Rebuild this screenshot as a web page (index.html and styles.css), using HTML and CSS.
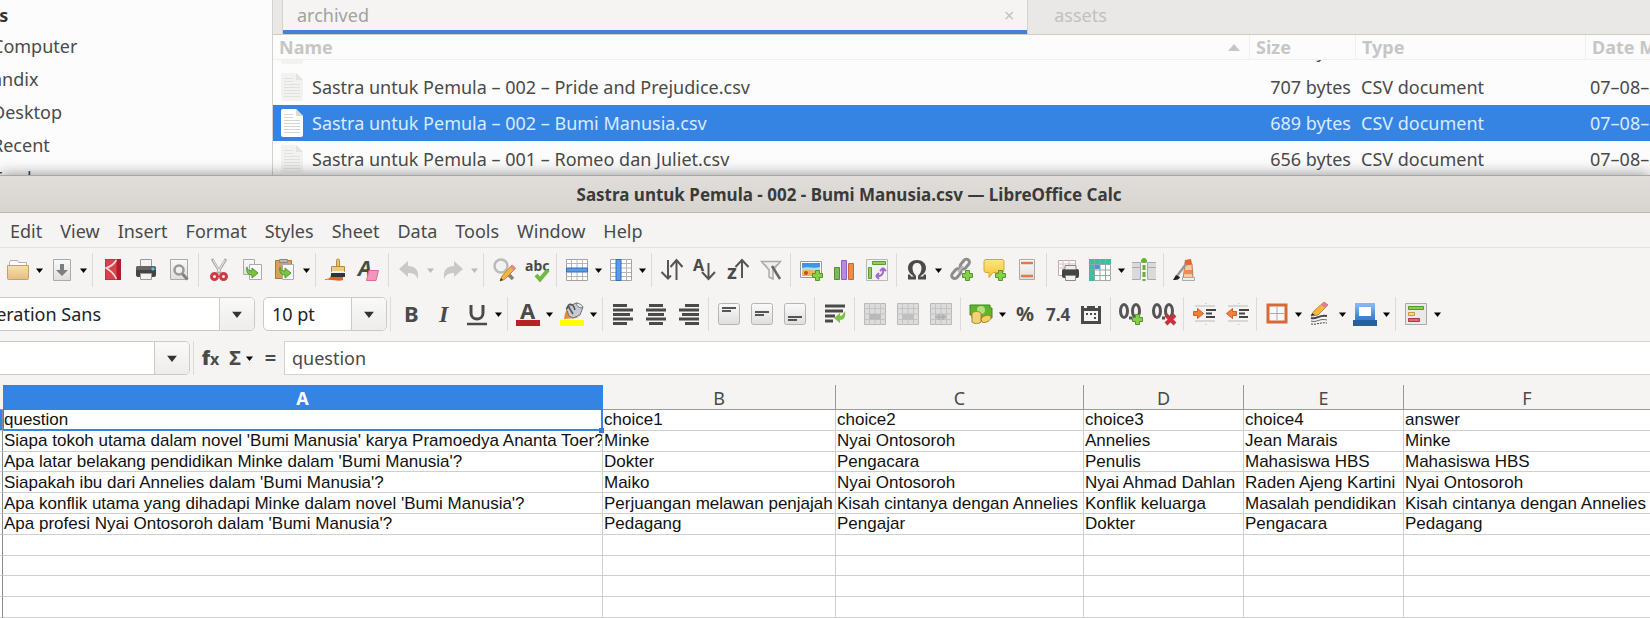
FILE: index.html
```html
<!DOCTYPE html>
<html lang="id">
<head>
<meta charset="utf-8">
<title>Sastra untuk Pemula - 002 - Bumi Manusia.csv — LibreOffice Calc</title>
<link rel="stylesheet" href="styles.css">
</head>
<body>
<svg class="defs" aria-hidden="true">
  <defs>
    <linearGradient id="gSheet" x1="0" y1="0" x2="0" y2="1"><stop offset="0" stop-color="#fafafa"/><stop offset="1" stop-color="#dedede"/></linearGradient>
    <linearGradient id="gFolder" x1="0" y1="0" x2="0" y2="1"><stop offset="0" stop-color="#f7dfb4"/><stop offset="1" stop-color="#e6bd7e"/></linearGradient>
    <linearGradient id="gBlue" x1="0" y1="0" x2="0" y2="1"><stop offset="0" stop-color="#86b8f0"/><stop offset="1" stop-color="#3f7fd0"/></linearGradient>
    <linearGradient id="gYellow" x1="0" y1="0" x2="0" y2="1"><stop offset="0" stop-color="#ffe680"/><stop offset="1" stop-color="#f5c33b"/></linearGradient>
    <symbol id="caret" viewBox="0 0 7 5"><path d="M0 .5h7L3.500 5z"/></symbol>
    <symbol id="plus" viewBox="0 0 11 11"><path d="M3.500.5h4v3h3v4h-3v3h-4v-3h-3v-4h3z" fill="#86cf4c" stroke="#55962a"/></symbol>
    <symbol id="page" viewBox="0 0 22 28"><path class="sheet-fill" d="M2 0h13l7 7v19a2 2 0 0 1-2 2H2a2 2 0 0 1-2-2V2a2 2 0 0 1 2-2z"/><path d="M15 0v7h7z" fill="#dcdad6"/><path d="M3 5.500h9M3 8.500h9M3 11.500h16M3 14.500h16M3 17.500h16M3 20.500h16M3 23.500h16" stroke="#d8d6d3"/></symbol>
    <symbol id="tableGrey" viewBox="0 0 24 24"><path d="M1.500 1.500h21v21h-21z" fill="#dcdcdc" stroke="#b9b9b9"/><path d="M6.500 1v22M12 1v22M17.500 1v22M1 6.500h22M1 12h22M1 17.500h22" stroke="#c3c3c3"/></symbol>
  </defs>
</svg>

<section class="files" aria-label="Files">
  <nav class="places" aria-label="Places">
    <h2>Devices</h2>
    <a href="#computer">Computer</a>
    <a href="#andix">andix</a>
    <a href="#desktop">Desktop</a>
    <a href="#recent">Recent</a>
    <a href="#trash">Trash</a>
  </nav>
  <div class="browser">
    <div class="tabs" role="tablist">
      <div class="tab active"><button type="button" role="tab" aria-selected="true">archived</button><button type="button" class="close" aria-label="Close tab">×</button></div>
      <div class="tab"><button type="button" role="tab" aria-selected="false">assets</button></div>
    </div>
    <table class="listing">
      <colgroup><col><col class="c-size"><col class="c-type"><col class="c-date"></colgroup>
      <thead><tr>
        <th><span class="sort">Name <svg class="sort-mark" viewBox="0 0 12 7" aria-hidden="true"><path d="M0 7L6 0l6 7z" fill="#c6c6c5"/></svg></span></th>
        <th>Size</th><th>Type</th><th>Date Modified</th>
      </tr></thead>
      <tbody>
        <tr class="peek"><td><div><span class="name"><svg class="page"><use href="#page"/></svg></span></div></td><td class="num"><div><span>bytes</span></div></td><td></td><td></td></tr>
        <tr><td><span class="name"><svg class="page"><use href="#page"/></svg>Sastra untuk Pemula – 002 – Pride and Prejudice.csv</span></td><td class="num">707 bytes</td><td>CSV document</td><td>07–08–2023</td></tr>
        <tr class="selected"><td><span class="name"><svg class="page"><use href="#page"/></svg>Sastra untuk Pemula – 002 – Bumi Manusia.csv</span></td><td class="num">689 bytes</td><td>CSV document</td><td>07–08–2023</td></tr>
        <tr><td><span class="name"><svg class="page"><use href="#page"/></svg>Sastra untuk Pemula – 001 – Romeo dan Juliet.csv</span></td><td class="num">656 bytes</td><td>CSV document</td><td>07–08–2023</td></tr>
      </tbody>
    </table>
  </div>
</section>

<main class="calc">
  <header class="titlebar"><h1>Sastra untuk Pemula - 002 - Bumi Manusia.csv — LibreOffice Calc</h1></header>
  <nav class="menubar" aria-label="Menu">
    <button type="button">Edit</button><button type="button">View</button><button type="button">Insert</button><button type="button">Format</button><button type="button">Styles</button><button type="button">Sheet</button><button type="button">Data</button><button type="button">Tools</button><button type="button">Window</button><button type="button">Help</button>
  </nav>

  <div class="toolbar standard" role="toolbar" aria-label="Standard">
    <button type="button" aria-label="Open"><svg viewBox="0 0 24 24"><path d="M3.500 11V4.500l1-2h7l1 2h8V11z" fill="#fff" stroke="#b5b1aa"/><path d="M1.500 7.500h21v13a1 1 0 0 1-1 1h-19a1 1 0 0 1-1-1z" fill="url(#gFolder)" stroke="#c9a063"/></svg></button>
    <button type="button" class="more" aria-label="Open options"><svg><use href="#caret"/></svg></button>
    <button type="button" aria-label="Save"><svg viewBox="0 0 24 24"><path d="M3.500 1.500h17v21h-17z" fill="url(#gSheet)" stroke="#aaa"/><path d="M10 6h4v6h4l-6 6-6-6h4z" fill="#7c7f80"/></svg></button>
    <button type="button" class="more" aria-label="Save options"><svg><use href="#caret"/></svg></button>
    <i class="sep"></i>
    <button type="button" aria-label="Export as PDF"><svg viewBox="0 0 24 24"><path d="M4 1h16v21H4z" fill="#c9303c"/><path d="M5 2h10v19H5z" fill="#d4444e"/><path d="M15.500 2C13 6 9 9 5 10c4 2 8 6 10.500 11" fill="none" stroke="#f8dcdd" stroke-width="1.500"/><path d="M16 1h4v21h-4z" fill="#b01c29"/></svg></button>
    <button type="button" aria-label="Print"><svg viewBox="0 0 24 24"><path d="M6.500 9V1.500h11V9" fill="#f4f4f4" stroke="#999"/><rect x="2" y="8" width="20" height="11" rx="2" fill="#444"/><path d="M3 8h18l1 4H2z" fill="#666"/><path d="M6.500 15.500h11v6h-11z" fill="#f2f2f2" stroke="#999"/><circle cx="19" cy="11" r="1.500" fill="#5bc7f0"/></svg></button>
    <button type="button" aria-label="Print Preview"><svg viewBox="0 0 24 24"><path d="M3.500 1.500h17v20h-17z" fill="url(#gSheet)" stroke="#aaa"/><circle cx="12" cy="12" r="4.500" fill="#f0f0f0" stroke="#999" stroke-width="2.500"/><path d="M15.500 16l5 5.500" stroke="#8a7f75" stroke-width="3"/></svg></button>
    <i class="sep"></i>
    <button type="button" aria-label="Cut"><svg viewBox="0 0 24 24"><path d="M5 1l8.500 14M19 1l-8.500 14" stroke="#a9a9a9" stroke-width="2.600"/><path d="M6 2l7 12M18 2l-7 12" stroke="#ededed"/><g fill="none" stroke="#cf3a45" stroke-width="3"><circle cx="7.500" cy="18.500" r="3"/><circle cx="16.500" cy="18.500" r="3"/></g></svg></button>
    <button type="button" aria-label="Copy"><svg viewBox="0 0 24 24"><path d="M3.500 1.500h11v15h-11z" fill="url(#gSheet)" stroke="#aaa"/><path d="M9.500 6.500h12v15h-12z" fill="#fafafa" stroke="#aaa"/><path d="M7 9c0 3 2 4 5 4v-3l6 5-6 5v-3c-4 0-6-3-5-8z" fill="#7cc244" stroke="#4c9a2a"/></svg></button>
    <button type="button" aria-label="Paste"><svg viewBox="0 0 24 24"><path d="M2.500 2.500h16v18h-16z" fill="#d3a35c" stroke="#a5793c"/><path d="M6.500 1.500h8v3h-8z" fill="#bbb" stroke="#888"/><path d="M9.500 6.500h11v15h-11z" fill="#fafafa" stroke="#aaa"/><path d="M7 9c0 3 2 4 5 4v-3l6 5-6 5v-3c-4 0-6-3-5-8z" fill="#7cc244" stroke="#4c9a2a"/></svg></button>
    <button type="button" class="more" aria-label="Paste options"><svg><use href="#caret"/></svg></button>
    <i class="sep"></i>
    <button type="button" aria-label="Clone Formatting"><svg viewBox="0 0 24 24"><path d="M1 21c4 0 5-1 6-4h12v5c-5 2-10-1-18 0z" fill="#e2632a"/><path d="M12.500 8V2.500a1.500 1.500 0 0 1 3 0V8" fill="#e8c27b" stroke="#b98a3c"/><path d="M7.500 8.500h13v5h-13z" fill="#edc982" stroke="#b98a3c"/><path d="M8 13h12v2H8z" fill="#eee"/><path d="M7 15h14v4H7z" fill="#333"/></svg></button>
    <button type="button" aria-label="Clear Direct Formatting"><svg viewBox="0 0 24 24"><text class="ital" x="1" y="18" font-size="22">A</text><path d="M12 12.500h9.500l-2.500 10H9.500z" fill="#f296bd" stroke="#e0669b" stroke-linejoin="round"/></svg></button>
    <i class="sep"></i>
    <button type="button" class="off" aria-label="Undo"><svg viewBox="0 0 24 24"><path d="M2 11l9-8v5c8 0 11 5 10 13-2-4-4-6-10-6v4z" fill="#c9c9c9"/></svg></button>
    <button type="button" class="more off" aria-label="Undo list"><svg><use href="#caret"/></svg></button>
    <button type="button" class="off" aria-label="Redo"><svg viewBox="0 0 24 24"><path d="M22 11l-9-8v5C5 8 2 13 3 21c2-4 4-6 10-6v4z" fill="#c9c9c9"/></svg></button>
    <button type="button" class="more off" aria-label="Redo list"><svg><use href="#caret"/></svg></button>
    <i class="sep"></i>
    <button type="button" aria-label="Find and Replace"><svg viewBox="0 0 24 24"><circle cx="9" cy="8" r="6.500" fill="#f2f2f2" stroke="#bbb" stroke-width="2.500"/><path d="M15 15l6 6" stroke="#8b7f72" stroke-width="3.500"/><path d="M8 23l2-5L20 7l3.500 3.500-11 11z" fill="#f4b63f" stroke="#c98a1d"/><path d="M18 9l2.500-2.500 3.500 3.500-2.500 2.500z" fill="#e08a98"/><path d="M8 23l1-3 2 2z" fill="#333"/></svg></button>
    <button type="button" aria-label="Spelling"><svg viewBox="0 0 24 24"><text x="0" y="13" font-size="14">abc</text><path d="M11 17l4 4.500 8-9.500" fill="none" stroke="#6fb944" stroke-width="4"/></svg></button>
    <i class="sep"></i>
    <button type="button" aria-label="Row"><svg viewBox="0 0 24 24"><path d="M1.500 1.500h21v21h-21z" fill="#fff" stroke="#a3a3a3"/><path d="M6.500 1v21M12 1v21M17.500 1v21M1 5.500h21M1 18.500h21" stroke="#b5b5b5"/><path d="M1.500 10h21v4h-21z" fill="#5b9be6" stroke="#2f6fbd"/></svg></button>
    <button type="button" class="more" aria-label="Row options"><svg><use href="#caret"/></svg></button>
    <button type="button" aria-label="Column"><svg viewBox="0 0 24 24"><path d="M1.500 1.500h21v21h-21z" fill="#fff" stroke="#a3a3a3"/><path d="M1 5.500h21M1 10h21M1 14.500h21M1 18.500h21M17.500 1v21" stroke="#b5b5b5"/><path d="M7 1.500h5v21H7z" fill="#5b9be6" stroke="#2f6fbd"/></svg></button>
    <button type="button" class="more" aria-label="Column options"><svg><use href="#caret"/></svg></button>
    <i class="sep"></i>
    <button type="button" aria-label="Sort"><svg class="ink" viewBox="0 0 24 24"><path d="M8 2v18M1.500 14L8 20.500l3-3M16.500 22V3M10.500 9l6-7 6 7"/></svg></button>
    <button type="button" aria-label="Sort Ascending"><svg class="ink" viewBox="0 0 24 24"><path d="M15.500 5v16M9 14l6.500 7 6.500-7"/><text x="0" y="13" font-size="16">A</text></svg></button>
    <button type="button" aria-label="Sort Descending"><svg class="ink" viewBox="0 0 24 24"><path d="M16 20V3M9.500 9L16 2l6.500 7"/><text x="1" y="21" font-size="20">z</text></svg></button>
    <button type="button" aria-label="AutoFilter"><svg viewBox="0 0 24 24"><path d="M2.500 3.500h19L14 12v9l-4-2v-7z" fill="#eee" stroke="#aaa" stroke-width="1.500"/><path d="M6 6l4 5M18 6l-5 5" stroke="#bbb"/><path d="M13 8l8 13" stroke="#666" stroke-width="2.500"/></svg></button>
    <i class="sep"></i>
    <button type="button" aria-label="Insert Image"><svg viewBox="0 0 24 24"><path d="M1.500 3.500h21v16h-21z" fill="#fff" stroke="#999"/><path d="M3 5h18v8H3z" fill="#3f98de"/><path d="M3 10c6-2 12 1 18-1v4H3z" fill="#a6e0f2"/><path d="M3 13c6-3 12 1 18-1v6H3z" fill="#f4b352"/><circle cx="7" cy="15" r="2" fill="#d0442d"/><use href="#plus" x="13" y="12" width="11" height="11"/></svg></button>
    <button type="button" aria-label="Insert Chart"><svg viewBox="0 0 24 24"><path d="M2.500 9.500h5v12h-5z" fill="#79b956" stroke="#4f8f30"/><path d="M9.500 2.500h5v19h-5z" fill="#b58ae0" stroke="#8e61c0"/><path d="M16.500 5.500h5v16h-5z" fill="#f08a55" stroke="#cd6430"/></svg></button>
    <button type="button" aria-label="Pivot Table"><svg viewBox="0 0 24 24"><path d="M1.500 1.500h21v21h-21z" fill="#f2f2f2" stroke="#b9b9b9"/><path d="M7.500 3.500h13v3h-13zM3.500 9.500h3v11h-3z" fill="#8fcf5f" stroke="#5c9a36"/><path d="M11 18c5 1 8-2 7-7M11 18l3-3M11 18l3 3M18 10l-3 3M18 10l3 3" fill="none" stroke="#a06cc9" stroke-width="2"/></svg></button>
    <i class="sep"></i>
    <button type="button" aria-label="Special Character"><svg viewBox="0 0 24 24"><path d="M3 21.500v-5h2l1 2h3C5 16 3 13.500 3 10c0-5 4-8 9-8s9 3 9 8c0 3.500-2 6-6 8.500h3l1-2h2v5h-8V18c2-2 3.500-5 3.500-8S15 5 12 5s-4.500 2-4.500 5S9 16 11 18v3.500z" fill="#4a4a4a"/></svg></button>
    <button type="button" class="more" aria-label="Special Character options"><svg><use href="#caret"/></svg></button>
    <button type="button" aria-label="Insert Hyperlink"><svg viewBox="0 0 24 24"><g fill="none" stroke="#8c8c8c" stroke-width="3"><rect x="-5" y="-3" width="11" height="6" rx="3" transform="translate(15.500 6.500) rotate(-50)"/><rect x="-5" y="-3" width="11" height="6" rx="3" transform="translate(7 16) rotate(-50)"/></g><path d="M9 14l5-6" stroke="#bbb" stroke-width="2"/><use href="#plus" x="13" y="12" width="11" height="11"/></svg></button>
    <button type="button" aria-label="Insert Comment"><svg viewBox="0 0 24 24"><path d="M4 1.500h16a2 2 0 0 1 2 2v9a2 2 0 0 1-2 2h-9l-4 5v-5H4a2 2 0 0 1-2-2v-9a2 2 0 0 1 2-2z" fill="url(#gYellow)" stroke="#d9a636"/><use href="#plus" x="13" y="12" width="11" height="11"/></svg></button>
    <button type="button" aria-label="Headers and Footers"><svg viewBox="0 0 24 24"><path d="M4.500 1.500h15v20h-15z" fill="url(#gSheet)" stroke="#aaa"/><path d="M6 5h12M6 18h12" stroke="#e07a4c" stroke-width="2.500"/></svg></button>
    <i class="sep"></i>
    <button type="button" aria-label="Define Print Area"><svg viewBox="0 0 24 24"><path d="M3.500 2.500h17v15h-17z" fill="#fff" stroke="#c7a7a7"/><path d="M3 6h18M3 10h18M8 2v15M14 2v15" stroke="#ddbcbc"/><rect x="7" y="11" width="17" height="9" rx="2" fill="#444"/><path d="M10 7.500h11v4H10z" fill="#eee" stroke="#888"/><path d="M10.500 17.500h10v5h-10z" fill="#f2f2f2" stroke="#888"/></svg></button>
    <button type="button" aria-label="Freeze Rows and Columns"><svg viewBox="0 0 24 24"><path d="M1.500 1.500h21v21h-21z" fill="#fff" stroke="#a8a8a8"/><path d="M1 1h22v5H6v17H1z" fill="#37c0a2"/><path d="M6 6h6v5H6z" fill="#4b94dd"/><path d="M6.500 1v21M12 1v21M17.500 1v21M1 6.500h21M1 12h21M1 17.500h21" stroke="#8aa9a2"/></svg></button>
    <button type="button" class="more" aria-label="Freeze options"><svg><use href="#caret"/></svg></button>
    <button type="button" aria-label="Split Window"><svg viewBox="0 0 24 24"><path d="M0 4h9v18H0zM15 4h9v18h-9z" fill="#d9dadd"/><path d="M0 4.500h8.500v17M24 4.500h-8.500v17M0 9.500h8M16 9.500h8M0 21.500h8M16 21.500h8" fill="none" stroke="#aaa"/><path d="M12 0v23" stroke="#62b132" stroke-width="3" stroke-dasharray="5 2"/><path d="M9 3h6" stroke="#62b132" stroke-width="3"/></svg></button>
    <i class="sep"></i>
    <button type="button" aria-label="Show Draw Functions"><svg viewBox="0 0 24 24"><path d="M13 7l7-1 1 15H11z" fill="#f6c9a2" stroke="#c9784a"/><path d="M13 2l6-1 1 5-8 2z" fill="#e0672e"/><path d="M13 12h7v4h-8z" fill="#ee8a4c"/><path d="M10.500 19.500h12v3h-12z" fill="#eee" stroke="#aaa"/><path d="M14 6L5 18" stroke="#999" stroke-width="2.500"/><path d="M1 22l3-5 4 2c-1 3-4 3-7 3z" fill="#222"/></svg></button>
  </div>

  <div class="toolbar" role="toolbar" aria-label="Formatting">
    <div class="combo font"><input type="text" aria-label="Font Name" value="Liberation Sans"><button type="button" aria-label="Font list"><svg><use href="#caret"/></svg></button></div>
    <div class="combo size"><input type="text" aria-label="Font Size" value="10 pt"><button type="button" aria-label="Size list"><svg><use href="#caret"/></svg></button></div>
    <i class="sep"></i>
    <button type="button" aria-label="Bold"><svg viewBox="0 0 24 24"><text x="5" y="20" font-size="22">B</text></svg></button>
    <button type="button" aria-label="Italic"><svg viewBox="0 0 24 24"><text class="serif" x="7" y="20" font-size="24">I</text></svg></button>
    <button type="button" aria-label="Underline"><svg viewBox="0 0 24 24"><path d="M6 3v8c0 8 12 8 12 0V3" fill="none" stroke="#4a4a4a" stroke-width="3"/><path d="M2 22h20" stroke="#4a4a4a" stroke-width="2.500"/></svg></button>
    <button type="button" class="more" aria-label="Underline options"><svg><use href="#caret"/></svg></button>
    <i class="sep"></i>
    <button type="button" aria-label="Font Color"><svg viewBox="0 0 24 24"><text x="4" y="17" font-size="22">A</text><path d="M0 18h24v6H0z" fill="#b92025"/></svg></button>
    <button type="button" class="more" aria-label="Font Color options"><svg><use href="#caret"/></svg></button>
    <button type="button" aria-label="Highlighting"><svg viewBox="0 0 24 24"><path d="M0 18h24v6H0z" fill="#ff0"/><path d="M4 17c1-5 1-8 4-10l5 8h6c-4 2-9 1-15 2z" fill="#f08a24"/><path d="M6 6l10-5 7 4-3 8-7 3-4-2z" fill="#c6c9cd" stroke="#6f7479"/><path d="M16 1c3 0 6 2 7 4-2 2-6 0-7-4z" fill="#eceef0" stroke="#6f7479"/><path d="M7 7c1-6 6-7 8 1M8 4l5 8" fill="none" stroke="#555" stroke-width="1.500"/></svg></button>
    <button type="button" class="more" aria-label="Highlighting options"><svg><use href="#caret"/></svg></button>
    <i class="sep"></i>
    <button type="button" aria-label="Align Left"><svg class="lines" viewBox="0 0 24 24"><path d="M2 3.500h14M2 8h20M2 12.500h17M2 17h20M2 21.500h14"/></svg></button>
    <button type="button" aria-label="Align Center"><svg class="lines" viewBox="0 0 24 24"><path d="M5 3.500h14M2 8h20M4 12.500h16M2 17h20M5 21.500h14"/></svg></button>
    <button type="button" aria-label="Align Right"><svg class="lines" viewBox="0 0 24 24"><path d="M8 3.500h14M2 8h20M5 12.500h17M2 17h20M8 21.500h14"/></svg></button>
    <i class="sep"></i>
    <button type="button" aria-label="Align Top"><svg viewBox="0 0 24 24"><rect x="1.500" y="1.500" width="21" height="21" rx="2" fill="url(#gSheet)" stroke="#b5b5b5"/><path d="M5 6h14M5 9h9" stroke="#555" stroke-width="2"/></svg></button>
    <button type="button" aria-label="Center Vertically"><svg viewBox="0 0 24 24"><rect x="1.500" y="1.500" width="21" height="21" rx="2" fill="url(#gSheet)" stroke="#b5b5b5"/><path d="M5 10h14M5 13h9" stroke="#555" stroke-width="2"/></svg></button>
    <button type="button" aria-label="Align Bottom"><svg viewBox="0 0 24 24"><rect x="1.500" y="1.500" width="21" height="21" rx="2" fill="url(#gSheet)" stroke="#b5b5b5"/><path d="M5 15h14M5 18h9" stroke="#555" stroke-width="2"/></svg></button>
    <i class="sep"></i>
    <button type="button" aria-label="Wrap Text"><svg class="lines" viewBox="0 0 24 24"><path d="M2 4h20M2 9h18M2 14h10M2 19h8"/><path class="wrap" d="M11 16l6-5v3c2 0 3-2 5-5 1 6-1 9-5 9v3z"/></svg></button>
    <i class="sep"></i>
    <button type="button" class="off" aria-label="Merge and Center"><svg viewBox="0 0 24 24"><use href="#tableGrey"/><path d="M6.500 12h11v5.500h-11z" fill="#b9b9b9"/></svg></button>
    <button type="button" class="off" aria-label="Merge Cells"><svg viewBox="0 0 24 24"><use href="#tableGrey"/><path d="M6.500 12h11v5.500h-11z" fill="#bfbfbf"/></svg></button>
    <button type="button" class="off" aria-label="Split Cells"><svg viewBox="0 0 24 24"><use href="#tableGrey"/><path d="M6.500 12h11v5.500h-11z" fill="#c2c2c2"/><path d="M10 12v6M14 12v6M6 15h11" stroke="#a9a9a9"/></svg></button>
    <i class="sep"></i>
    <button type="button" aria-label="Format as Currency"><svg viewBox="0 0 24 24"><path d="M1 3h20v3h2v10H3v-3H1z" fill="#5eb52c" stroke="#3e8a18"/><circle cx="12" cy="8" r="4" fill="#b2e07c"/><path d="M3 11c2-2 7-2 9 0v9c-2 2-7 2-9 0z" fill="#f0d27a" stroke="#a8842c"/><path d="M12 17c2-4 9-5 10-2s-6 7-9 5z" fill="#f3cf60" stroke="#a8842c"/></svg></button>
    <button type="button" class="more" aria-label="Currency options"><svg><use href="#caret"/></svg></button>
    <button type="button" aria-label="Format as Percent"><svg viewBox="0 0 24 24"><text x="3" y="19" font-size="20">%</text></svg></button>
    <button type="button" aria-label="Format as Number"><svg viewBox="0 0 24 24"><text x="0" y="19" font-size="17">7.4</text></svg></button>
    <button type="button" aria-label="Format as Date"><svg viewBox="0 0 24 24"><path d="M2 4h20v18H2z" fill="#4a4a4a"/><path d="M5 9h14v10H5z" fill="#f5f5f4"/><path d="M5 5h3M16 5h3" stroke="#f5f5f4" stroke-width="2"/><path d="M7 12h2M11 12h2M15 12h2M15 16h2" stroke="#4a4a4a" stroke-width="2"/></svg></button>
    <i class="sep"></i>
    <button type="button" aria-label="Add Decimal Place"><svg class="ink digits" viewBox="0 0 24 24"><ellipse cx="5" cy="9" rx="3.500" ry="6.500"/><ellipse cx="17" cy="9" rx="3.500" ry="6.500"/><path d="M10 16h3"/><use href="#plus" x="13" y="12" width="11" height="11"/></svg></button>
    <button type="button" aria-label="Delete Decimal Place"><svg class="ink digits" viewBox="0 0 24 24"><ellipse cx="5" cy="9" rx="3.500" ry="6.500"/><ellipse cx="17" cy="9" rx="3.500" ry="6.500"/><path d="M10 16h3"/><path class="cross" d="M14 13l9 9M23 13l-9 9"/></svg></button>
    <i class="sep"></i>
    <button type="button" aria-label="Increase Indent"><svg viewBox="0 0 24 24"><path d="M1.500 9.500h4v-3l6 5-6 5v-3h-4z" fill="#f0803c" stroke="#cf5f24"/><path d="M3 4h20M3 19h20M14 1v1M14 22v1" stroke="#bbb"/><path d="M14 8h10M14 11.500h6M14 15h9" stroke="#444" stroke-width="2"/></svg></button>
    <button type="button" aria-label="Decrease Indent"><svg viewBox="0 0 24 24"><path d="M11.500 9.500h-4v-3l-6 5 6 5v-3h4z" fill="#f0803c" stroke="#cf5f24"/><path d="M3 4h20M3 19h20M14 1v1M14 22v1" stroke="#bbb"/><path d="M14 8h10M14 11.500h6M14 15h9" stroke="#444" stroke-width="2"/></svg></button>
    <i class="sep"></i>
    <button type="button" aria-label="Borders"><svg viewBox="0 0 24 24"><path d="M3 3h18v17H3z" fill="#f8f8f8" stroke="#d5693a" stroke-width="3"/><path d="M12 5v13M5 11.500h14" stroke="#aaa"/></svg></button>
    <button type="button" class="more" aria-label="Borders options"><svg><use href="#caret"/></svg></button>
    <button type="button" aria-label="Border Style"><svg viewBox="0 0 24 24"><path d="M2 14l3-5L15 0l4 3L9 13z" fill="#f6b743" stroke="#c98a1d"/><path d="M15 0l4 3-2.500 3L12 3z" fill="#dd7f9c"/><path d="M2 14l1-3 3 2z" fill="#333"/><path d="M2 16c6 2 8-4 16-2" fill="none" stroke="#444" stroke-width="2"/><path d="M2 19c6 2 8-3 16-1" fill="none" stroke="#666"/><path d="M2 22c6 1 9-2 16-1" fill="none" stroke="#444" stroke-dasharray="2 1"/></svg></button>
    <button type="button" class="more" aria-label="Border Style options"><svg><use href="#caret"/></svg></button>
    <button type="button" aria-label="Border Color"><svg viewBox="0 0 24 24"><path d="M4 3h16v13H4z" fill="#fff" stroke="url(#gBlue)" stroke-width="4"/><path d="M0 18h24v6H0z" fill="#2a6099"/></svg></button>
    <button type="button" class="more" aria-label="Border Color options"><svg><use href="#caret"/></svg></button>
    <i class="sep"></i>
    <button type="button" aria-label="Conditional Formatting"><svg viewBox="0 0 24 24"><path d="M1.500 1.500h21v21h-21z" fill="#e9e9e7" stroke="#aaa"/><path d="M4.500 4.500h15v3h-15z" fill="#86cf4c" stroke="#55962a"/><path d="M4.500 10.500h6v3h-6z" fill="#fbd789" stroke="#cf9530"/><path d="M4.500 16.500h11v3h-11z" fill="#e46575" stroke="#b73545"/></svg></button>
    <button type="button" class="more" aria-label="Conditional options"><svg><use href="#caret"/></svg></button>
  </div>

  <div class="formula">
    <div class="combo namebox"><input type="text" aria-label="Name Box" value=""><button type="button" aria-label="Name list"><svg><use href="#caret"/></svg></button></div>
    <i class="sep"></i>
    <button type="button" class="fn wide" aria-label="Function Wizard"><b>f</b><small>x</small></button>
    <button type="button" class="fn" aria-label="Select Function">Σ</button>
    <button type="button" class="more" aria-label="Function options"><svg><use href="#caret"/></svg></button>
    <button type="button" class="fn wide" aria-label="Formula">=</button>
    <input class="line" type="text" aria-label="Input line" value="question">
  </div>

  <div class="sheet">
    <table>
      <colgroup><col class="w-head"><col class="w-a"><col class="w-b"><col class="w-c"><col class="w-de"><col class="w-de"><col></colgroup>
      <thead><tr><th></th><th class="on" scope="col">A</th><th scope="col">B</th><th scope="col">C</th><th scope="col">D</th><th scope="col">E</th><th scope="col">F</th></tr></thead>
      <tbody>
        <tr><th class="on"></th><td class="cursor">question</td><td>choice1</td><td>choice2</td><td>choice3</td><td>choice4</td><td>answer</td></tr>
        <tr><th></th><td>Siapa tokoh utama dalam novel 'Bumi Manusia' karya Pramoedya Ananta Toer?</td><td>Minke</td><td>Nyai Ontosoroh</td><td>Annelies</td><td>Jean Marais</td><td>Minke</td></tr>
        <tr><th></th><td>Apa latar belakang pendidikan Minke dalam 'Bumi Manusia'?</td><td>Dokter</td><td>Pengacara</td><td>Penulis</td><td>Mahasiswa HBS</td><td>Mahasiswa HBS</td></tr>
        <tr><th></th><td>Siapakah ibu dari Annelies dalam 'Bumi Manusia'?</td><td>Maiko</td><td>Nyai Ontosoroh</td><td>Nyai Ahmad Dahlan</td><td>Raden Ajeng Kartini</td><td>Nyai Ontosoroh</td></tr>
        <tr><th></th><td>Apa konflik utama yang dihadapi Minke dalam novel 'Bumi Manusia'?</td><td>Perjuangan melawan penjajah</td><td>Kisah cintanya dengan Annelies</td><td>Konflik keluarga</td><td>Masalah pendidikan</td><td>Kisah cintanya dengan Annelies</td></tr>
        <tr><th></th><td>Apa profesi Nyai Ontosoroh dalam 'Bumi Manusia'?</td><td>Pedagang</td><td>Pengajar</td><td>Dokter</td><td>Pengacara</td><td>Pedagang</td></tr>
        <tr><th></th><td></td><td></td><td></td><td></td><td></td><td></td></tr>
        <tr><th></th><td></td><td></td><td></td><td></td><td></td><td></td></tr>
        <tr><th></th><td></td><td></td><td></td><td></td><td></td><td></td></tr>
        <tr><th></th><td></td><td></td><td></td><td></td><td></td><td></td></tr>
      </tbody>
    </table>
  </div>
</main>
</body>
</html>
```

FILE: styles.css
```css
* { box-sizing: border-box; }
html, body { height: 100%; }
body {
  margin: 0;
  display: flex;
  flex-direction: column;
  overflow: hidden;
  background: #fcfcfc;
  color: #4a4a4a;
  font: 18px/24px "Noto Sans", "Open Sans", sans-serif;
}
button, input { font: inherit; color: inherit; border: 0; padding: 0; margin: 0; background: none; }
svg { display: block; flex: none; }
.defs { position: absolute; width: 0; height: 0; }

/* File manager */
.files { display: flex; flex: none; height: 175px; overflow: hidden; }
.places { flex: none; width: 273px; border-right: 1px solid #d5d2ce; overflow: hidden; }
.places h2 { margin: 0 0 0 -60px; font-size: 18px; line-height: 30px; color: #333; }
.places a { display: block; margin-left: -8px; line-height: 33px; color: inherit; text-decoration: none; }
.browser { flex: 1; min-width: 0; }
.tabs { display: grid; grid-template-columns: 6fr 5fr; height: 35px; padding-left: 9px; background: #e9e8e6; border-bottom: 1px solid #d0cdc9; }
.tab { display: flex; justify-content: space-between; padding: 0 13px 0 26px; color: #c2c1bf; }
.tab button { height: 29px; }
.tab.active { padding-left: 14px; background: #f5f4f3; color: #a3a2a0; border: solid #d5d2ce; border-width: 0 1px; box-shadow: inset 0 -4px #4180d2; }
.tab .close { color: #c2c1bf; }
.listing { width: 100%; table-layout: fixed; border-spacing: 0; white-space: nowrap; }
.c-size { width: 106px; }
.c-type { width: 230px; }
.c-date { width: 65px; }
.listing th { height: 25px; padding: 1px 6px 0; line-height: 23px; border: solid #f0efee; border-width: 0 0 1px 1px; text-align: left; color: #c6c6c5; overflow: hidden; }
.listing th:first-child { border-left: 0; }
.sort { display: flex; align-items: center; justify-content: space-between; }
.sort-mark { width: 12px; height: 7px; margin-right: 3px; }
.listing td { height: 36px; padding: 0 0 0 6px; overflow: hidden; }
.listing td:first-child { padding-left: 8px; }
.listing td.num { padding: 0 4px 0 0; text-align: right; }
.listing td:last-child { padding-left: 5px; }
.listing .peek td { height: 9px; }
.peek div { height: 9px; display: flex; align-items: flex-end; justify-content: flex-end; overflow: hidden; }
.peek td:first-child div { justify-content: flex-start; }
.peek span { line-height: 36px; }
.name { display: flex; align-items: center; gap: 9px; }
.page { width: 22px; height: 28px; opacity: .7; fill: #efeeec; }
.peek .page { margin-bottom: 5px; }
.selected { background: #3584e4; color: #d9ebff; }
.selected .page { opacity: 1; fill: #fff; }

/* Calc window */
.calc { flex: 1; min-height: 0; display: flex; flex-direction: column; position: relative; background: #f5f4f3; border-top: 1px solid #a9a7a4; box-shadow: 0 0 14px rgba(0, 0, 0, .45); }
.titlebar { flex: none; height: 37px; display: flex; align-items: center; justify-content: center; padding: 2px 0 0 48px; background: linear-gradient(#e0ddda, #d8d5d0); border-bottom: 1px solid #bdb8b2; }
.titlebar h1 { margin: 0; font-size: 17px; line-height: 24px; color: #3a3a3a; white-space: nowrap; }
.menubar { flex: none; display: flex; gap: 18px; height: 35px; padding: 2px 0 0 10px; border-bottom: 1px solid #e3e1df; }
.toolbar { flex: none; display: flex; align-items: center; height: 44px; }
.standard { padding-left: 1px; }
.toolbar > button { flex: none; width: 33px; height: 34px; display: flex; align-items: center; justify-content: center; }
.toolbar > button svg { width: 24px; height: 24px; overflow: visible; }
.toolbar > .more, .formula > .more { width: 11px; fill: #000; }
.toolbar > .more svg, .more svg { width: 7px; height: 5px; }
.toolbar > .more.off { fill: #bbb; }
.sep { flex: none; width: 1px; height: 34px; margin: 0 3px; background: #dddbd8; }
.toolbar text { font-family: "Noto Sans", sans-serif; font-weight: 700; fill: #4a4a4a; stroke: none; }
.toolbar .ital { font-style: italic; }
.toolbar .serif { font-family: "Liberation Serif", serif; font-style: italic; }
.ink { fill: none; stroke: #555; stroke-width: 2; }
.digits { stroke-width: 3; }
.ink .cross { stroke: #cc2f3d; stroke-width: 4; }
.digits use { stroke-width: 1; }
.lines { fill: none; stroke: #4a4a4a; stroke-width: 3; }
.lines .wrap { fill: #7cc244; stroke: none; }
.combo { flex: none; display: flex; height: 34px; background: #fff; border: 1px solid #cdc9c4; border-radius: 5px; overflow: hidden; color: #222; }
.combo input { flex: 1; min-width: 0; padding: 0 8px; }
.combo button { flex: none; width: 35px; display: flex; align-items: center; justify-content: center; background: linear-gradient(#f9f9f8, #eeedeb); border-left: 1px solid #cdc9c4; }
.combo svg { width: 12px; height: 7px; fill: #333; }
.font { width: 293px; margin: 0 8px 0 -38px; }
.size { width: 124px; }
.formula { flex: none; display: flex; align-items: center; padding: 5px 0 10px; }
.namebox { width: 220px; margin-left: -30px; }
.fn { width: 22px; font-weight: 700; font-size: 20px; }
.fn.wide { width: 27px; }
.fn small { font-size: 16px; }
.line { flex: 1; min-width: 0; height: 34px; padding: 0 7px; background: #fff; border: solid #d5d2ce; border-width: 1px 0 1px 1px; }

/* Spreadsheet grid */
.sheet { flex: 1; min-height: 0; }
.sheet table { width: 100%; height: 100%; table-layout: fixed; border-spacing: 0; white-space: nowrap; font: 17px/18px "Liberation Sans", Arial, sans-serif; color: #111; background: #fff; }
.w-head { width: 3px; }
.w-a { width: 600px; }
.w-b { width: 233px; }
.w-c { width: 248px; }
.w-de { width: 160px; }
.sheet th, .sheet td { padding: 0; border: solid #cfcfcf; border-width: 0 1px 1px 0; }
.sheet td { height: 20px; padding: 1px 0 0 1px; overflow: hidden; }
.sheet tbody th { border-right-color: #8c8c8c; }
.sheet thead th { height: 25px; padding-top: 2px; font: 18px/22px "Noto Sans", sans-serif; color: #4a4a4a; background: #f5f4f3; border-color: #9a9a98; }
.sheet thead th:last-child, .sheet td:last-child { border-right: 0; }
.sheet thead th:first-child { border-right: 0; }
.sheet thead .on { background: #3584e4; color: #fff; font-weight: 700; border-color: #3584e4; }
.sheet tbody .on { background: #3584e4; }
.sheet .cursor { position: relative; overflow: visible; border-color: #3584e4; box-shadow: inset 0 -1px #3584e4, inset -1px 0 #3584e4, inset 1px 0 #3584e4; }
.cursor::after { content: ""; position: absolute; right: -2px; bottom: -3px; width: 5px; height: 5px; background: #3a7bcb; }
```
